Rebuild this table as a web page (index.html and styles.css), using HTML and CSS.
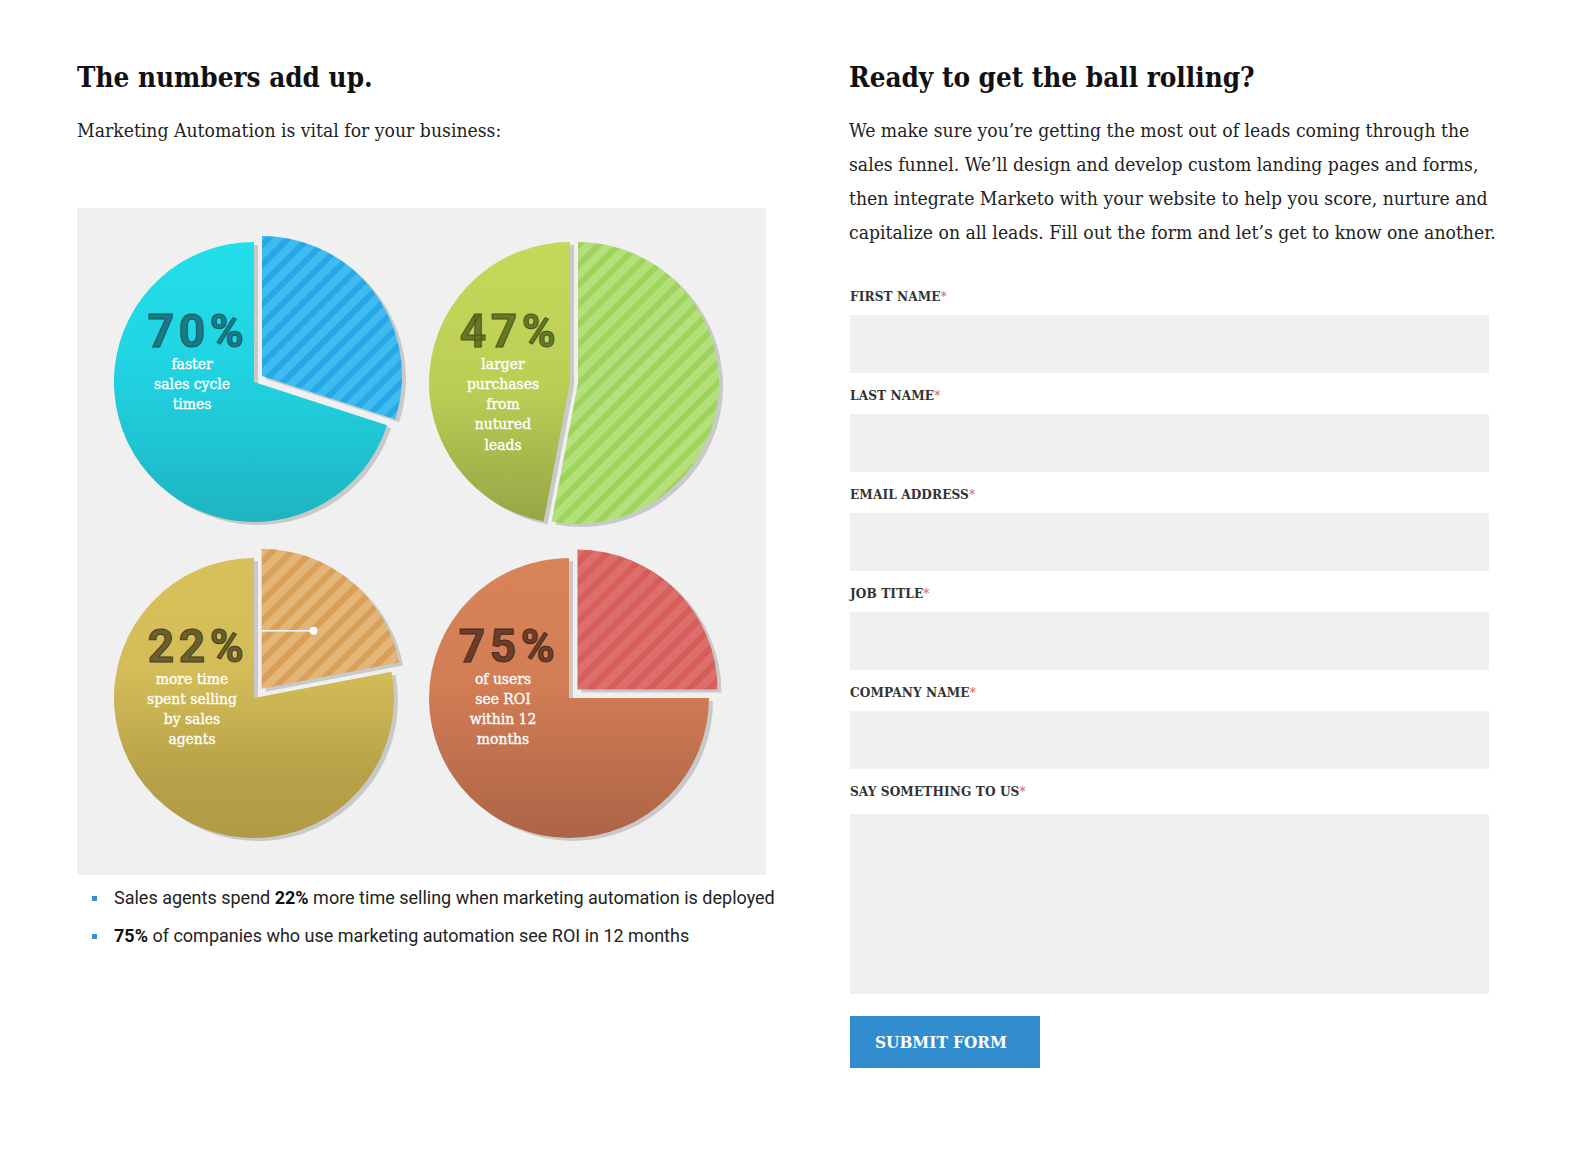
FILE: index.html
```html
<!DOCTYPE html>
<html lang="en">
<head>
<meta charset="utf-8">
<title>The numbers add up</title>
<link rel="stylesheet" href="styles.css">
</head>
<body>
<main class="page">
  <section class="stats">
    <h2 class="title">The numbers add up.</h2>
    <p class="lead">Marketing Automation is vital for your business:</p>
    <div class="chart">
      <svg width="689" height="667" viewBox="0 0 689 667" xmlns="http://www.w3.org/2000/svg">
        <defs>
          <linearGradient id="g1" x1="0" y1="0" x2="0" y2="1"><stop offset="0" stop-color="#23dfea"/><stop offset="0.45" stop-color="#21d3e2"/><stop offset="1" stop-color="#1eb4c2"/></linearGradient>
          <linearGradient id="g2" x1="0" y1="0" x2="0" y2="1"><stop offset="0" stop-color="#c6d85a"/><stop offset="0.5" stop-color="#bccf55"/><stop offset="1" stop-color="#97a646"/></linearGradient>
          <linearGradient id="g3" x1="0" y1="0" x2="0" y2="1"><stop offset="0" stop-color="#d8c15a"/><stop offset="0.4" stop-color="#d4bd58"/><stop offset="0.75" stop-color="#b8a349"/><stop offset="1" stop-color="#b09a44"/></linearGradient>
          <linearGradient id="g4" x1="0" y1="0" x2="0" y2="1"><stop offset="0" stop-color="#d9835a"/><stop offset="0.45" stop-color="#d27d55"/><stop offset="1" stop-color="#ac6446"/></linearGradient>
          <pattern id="p1" width="14" height="14" patternUnits="userSpaceOnUse" patternTransform="rotate(45)"><rect width="14" height="14" fill="#3ebcef"/><rect width="6" height="14" fill="#26a8e7"/></pattern>
          <pattern id="p2" width="14" height="14" patternUnits="userSpaceOnUse" patternTransform="rotate(45)"><rect width="14" height="14" fill="#b4e07c"/><rect width="6" height="14" fill="#9ed45c"/></pattern>
          <pattern id="p3" width="14" height="14" patternUnits="userSpaceOnUse" patternTransform="rotate(45)"><rect width="14" height="14" fill="#e3b678"/><rect width="6" height="14" fill="#da9f58"/></pattern>
          <pattern id="p4" width="14" height="14" patternUnits="userSpaceOnUse" patternTransform="rotate(45)"><rect width="14" height="14" fill="#de6e6c"/><rect width="6" height="14" fill="#d65d58"/></pattern>
          <path id="m1" d="M177 174 L310.1 217.3 A140 140 0 1 1 177 34 Z"/>
          <path id="s1" d="M185 168 L185 28 A140 140 0 0 1 318.1 211.3 Z"/>
          <path id="m2" d="M493 175 L466.6 313.5 A141 141 0 0 1 493 34 Z"/>
          <path id="s2" d="M501 175 L501 34 A141 141 0 1 1 474.6 313.5 Z"/>
          <path id="m3" d="M177 490 L314.5 463.8 A140 140 0 1 1 177 350 Z"/>
          <path id="s3" d="M184.6 480.8 L184.6 340.8 A140 140 0 0 1 322.1 454.6 Z"/>
          <path id="m4" d="M492 490 L632 490 A140 140 0 1 1 492 350 Z"/>
          <path id="s4" d="M500.5 481.5 L500.5 341.5 A140 140 0 0 1 640.5 481.5 Z"/>
        </defs>
        <g class="shadow">
          <use href="#m1" transform="translate(4,3)"/>
          <use href="#s1" transform="translate(4,3)"/>
          <use href="#m2" transform="translate(4,3)"/>
          <use href="#s2" transform="translate(4,3)"/>
          <use href="#m3" transform="translate(4,3)"/>
          <use href="#s3" transform="translate(4,3)"/>
          <use href="#m4" transform="translate(4,3)"/>
          <use href="#s4" transform="translate(4,3)"/>
        </g>
        <use href="#m1" fill="url(#g1)"/>
        <use href="#s1" fill="url(#p1)"/>
        <use href="#m2" fill="url(#g2)"/>
        <use href="#s2" fill="url(#p2)"/>
        <use href="#m3" fill="url(#g3)"/>
        <use href="#s3" fill="url(#p3)"/>
        <use href="#m4" fill="url(#g4)"/>
        <use href="#s4" fill="url(#p4)"/>
        <line x1="185" y1="422.7" x2="236" y2="422.7" stroke="#fff" stroke-width="1.4"/>
        <circle cx="236.5" cy="422.7" r="4" fill="#fff"/>

        <text class="pct pct-teal" x="121" y="139">70%</text>
        <text class="cap" x="115"><tspan x="115" y="161">faster</tspan><tspan x="115" y="181">sales cycle</tspan><tspan x="115" y="201">times</tspan></text>

        <text class="pct pct-olive" x="433" y="139">47%</text>
        <text class="cap" x="426"><tspan x="426" y="161">larger</tspan><tspan x="426" y="181">purchases</tspan><tspan x="426" y="201">from</tspan><tspan x="426" y="221">nutured</tspan><tspan x="426" y="242">leads</tspan></text>

        <text class="pct pct-gold" x="121" y="454">22%</text>
        <text class="cap" x="115"><tspan x="115" y="476">more time</tspan><tspan x="115" y="496">spent selling</tspan><tspan x="115" y="516">by sales</tspan><tspan x="115" y="536">agents</tspan></text>

        <text class="pct pct-brown" x="432" y="454">75%</text>
        <text class="cap" x="426"><tspan x="426" y="476">of users</tspan><tspan x="426" y="496">see ROI</tspan><tspan x="426" y="516">within 12</tspan><tspan x="426" y="536">months</tspan></text>
      </svg>
    </div>
    <ul class="facts">
      <li>Sales agents spend <b>22%</b> more time selling when marketing automation is deployed</li>
      <li><b>75%</b> of companies who use marketing automation see ROI in 12 months</li>
    </ul>
  </section>

  <section class="contact">
    <h2 class="title">Ready to get the ball rolling?</h2>
    <p class="intro">We make sure you’re getting the most out of leads coming through the<br>sales funnel. We’ll design and develop custom landing pages and forms,<br>then integrate Marketo with your website to help you score, nurture and<br>capitalize on all leads. Fill out the form and let’s get to know one another.</p>
    <form class="form" action="#" onsubmit="return false">
      <label class="field"><span class="label">FIRST NAME<em>*</em></span><input class="input" type="text"></label>
      <label class="field"><span class="label">LAST NAME<em>*</em></span><input class="input" type="text"></label>
      <label class="field"><span class="label">EMAIL ADDRESS<em>*</em></span><input class="input" type="email"></label>
      <label class="field"><span class="label">JOB TITLE<em>*</em></span><input class="input" type="text"></label>
      <label class="field"><span class="label">COMPANY NAME<em>*</em></span><input class="input" type="text"></label>
      <label class="field field-area"><span class="label">SAY SOMETHING TO US<em>*</em></span><textarea class="input area"></textarea></label>
      <button class="submit" type="submit">SUBMIT FORM</button>
    </form>
  </section>
</main>
</body>
</html>
```

FILE: styles.css
```css
* { box-sizing: border-box; }
html, body { margin: 0; background: #fff; }
body {
  font-family: "DejaVu Serif", serif;
  font-stretch: condensed;
  color: #222;
}

.page {
  display: grid;
  grid-template-columns: 689px 680px;
  column-gap: 83px;
  padding: 60px 0 0 77px;
  align-items: start;
}

.title {
  margin: 0;
  font-size: 27.6px;
  line-height: 36px;
  font-weight: 700;
  color: #111;
}

.lead, .intro {
  margin: 18px 0 0;
  font-size: 19.2px;
  line-height: 34px;
}

.chart {
  margin-top: 60px;
  width: 689px;
  height: 667px;
  background: #f0f0f0;
}
.chart svg { display: block; }
.shadow { fill: #c9c9c9; }

.pct {
  font-family: Roboto, "DejaVu Sans", sans-serif;
  font-stretch: normal;
  font-weight: 700;
  font-size: 46px;
  letter-spacing: 4.5px;
  text-anchor: middle;
  stroke-width: 1px;
  paint-order: fill;
}
.pct-teal { fill: #1b7b85; stroke: #0f5a63; }
.pct-olive { fill: #687829; stroke: #485516; }
.pct-gold { fill: #6b5f2d; stroke: #483e18; }
.pct-brown { fill: #6c3e2a; stroke: #4a2919; }

.cap {
  font-family: "DejaVu Serif", serif;
  font-stretch: condensed;
  font-size: 15.5px;
  fill: #fff;
  stroke: #fff;
  stroke-width: 0.35px;
  text-anchor: middle;
}

.facts {
  list-style: none;
  margin: 4px 0 0;
  padding: 0;
  font-family: Roboto, "DejaVu Sans", sans-serif;
  font-stretch: normal;
  font-size: 18px;
  color: #222;
}
.facts li {
  position: relative;
  padding-left: 37px;
  line-height: 38px;
  white-space: nowrap;
}
.facts li::before {
  content: "";
  position: absolute;
  left: 15px;
  top: 17px;
  width: 5px;
  height: 5px;
  background: #3a8fd1;
}
.facts b { font-weight: 700; color: #111; }

.form { margin-top: 38px; }
.field { display: block; margin-bottom: 14px; }
.label {
  display: block;
  padding-left: 1px;
  margin-bottom: 11px;
  font-size: 13.5px;
  line-height: 16px;
  font-weight: 700;
  color: #333;
  letter-spacing: 0.1px;
}
.label em { font-style: normal; color: #e05a5a; font-weight: 400; }
.field-area .label { margin-bottom: 15px; }

.input {
  display: block;
  width: 639px;
  height: 58px;
  margin: 0 0 0 1px;
  border: 0;
  background: #f0f0f0;
  font: inherit;
}
.area { height: 180px; resize: none; }

.field-area { margin-bottom: 0; }
.submit {
  display: block;
  margin: 22px 0 0 1px;
  width: 190px;
  height: 52px;
  padding: 0 0 0 25px;
  border: 0;
  background: #318dcd;
  color: #fff;
  font-family: "DejaVu Serif", serif;
  font-stretch: condensed;
  font-size: 17px;
  font-weight: 700;
  text-align: left;
  cursor: pointer;
}
```
